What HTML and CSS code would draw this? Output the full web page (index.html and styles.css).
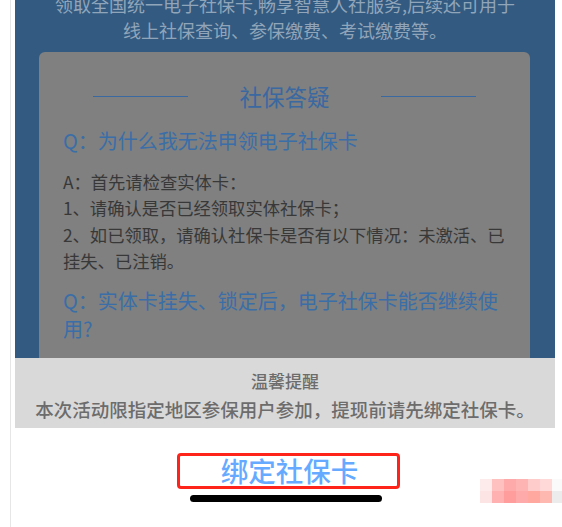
FILE: index.html
```html
<!DOCTYPE html>
<html lang="zh">
<head>
<meta charset="utf-8">
<link rel="stylesheet" href="styles.css">
</head>
<body>
<div class="page">
  <div class="gutter"></div>
  <div class="main">
    <div class="panel">
      <p class="intro">领取全国统一电子社保卡,畅享智慧人社服务,后续还可用于<br>线上社保查询、参保缴费、考试缴费等。</p>
      <div class="card">
        <div class="title-row"><span class="rule"></span><h2 class="title">社保答疑</h2><span class="rule"></span></div>
        <p class="q">Q：为什么我无法申领电子社保卡</p>
        <p class="a">A：首先请检查实体卡：<br>1、请确认是否已经领取实体社保卡；<br>2、如已领取，请确认社保卡是否有以下情况：未激活、已挂失、已注销。</p>
        <p class="q q2">Q：实体卡挂失、锁定后，电子社保卡能否继续使用?</p>
      </div>
    </div>
    <div class="notice">
      <div class="notice-title">温馨提醒</div>
      <div class="notice-text">本次活动限指定地区参保用户参加，提现前请先绑定社保卡。</div>
    </div>
    <div class="bottom">
      <div class="bind">绑定社保卡</div>
      <div class="home-bar"></div>
    </div>
  </div>
</div>
<div class="mosaic">
  <i style="background:#fdeaea"></i><i style="background:#ffc0c0"></i><i style="background:#ffaaaa"></i><i style="background:#ffb4b4"></i><i style="background:#ffcccc"></i><i style="background:#ffd8d8"></i><i style="background:#fafafa"></i>
  <i style="background:#fde4e4"></i><i style="background:#ffb0b0"></i><i style="background:#ff9c9c"></i><i style="background:#ffaaaa"></i><i style="background:#ffa8a0"></i><i style="background:#ffb8b0"></i><i style="background:#ececec"></i>
</div>
</body>
</html>
```
FILE: styles.css
```css
* { box-sizing: border-box; }
html, body { margin: 0; padding: 0; background: #fff; }
body {
  width: 562px; height: 527px; overflow: hidden; position: relative;
  font-family: "Noto Sans CJK SC", "Noto Sans", sans-serif;
}
.page { display: flex; height: 527px; }
.gutter { width: 11px; border-right: 1px solid #e6e6e6; flex: none; }
.main { width: 540px; margin-left: 4px; flex: none; display: flex; flex-direction: column; }
.panel {
  height: 358px; background: #335a80; overflow: hidden;
  display: flex; flex-direction: column; align-items: flex-start;
}
.intro {
  margin: -9px 0 0; width: 100%; text-align: center;
  font-size: 18px; line-height: 26px; color: #91a5ba;
}
.card {
  margin: 9px 0 0 24px; width: 491px; flex: 1;
  background: #808080; border-radius: 6px 6px 0 0;
  padding: 29px 24px 0 24px;
}
.title-row { display: flex; align-items: center; justify-content: center; gap: 51px; height: 30px; }
.rule { width: 95px; height: 1px; background: #3a68a0; }
.title { margin: 0; font-size: 22.5px; line-height: 30px; font-weight: 400; color: #3a68a0; }
.q { margin: 16px 0 0; font-size: 20px; line-height: 28px; color: #3a6ea8; }
.a { margin: 14px 0 0; font-size: 17.3px; line-height: 26.4px; color: #383838; }
.q2 { margin-top: 12px; }
.notice {
  height: 70px; background: #d9d9d9; padding-top: 9px;
  text-align: center; color: #6c6c6c; font-weight: 500;
}
.notice-title { font-size: 17px; line-height: 28px; }
.notice-text { font-size: 18.5px; line-height: 28px; white-space: nowrap; }
.bottom { display: flex; flex-direction: column; align-items: center; }
.bind {
  margin-top: 25px; align-self: flex-start; margin-left: 162px;
  width: 223px; height: 36px; border: 3px solid #ff2419; border-radius: 4px;
  display: flex; align-items: center; justify-content: center;
  font-size: 27.5px; font-weight: 500; color: #66aaff; line-height: 1;
  padding-left: 2px;
}
.home-bar {
  margin-top: 6px; align-self: flex-start; margin-left: 175px;
  width: 192px; height: 7px; border-radius: 4px; background: #000;
}
.mosaic {
  position: absolute; left: 480px; top: 479px;
  display: grid; grid-template-columns: repeat(6, 12px) 10px; grid-auto-rows: 12px;
}
.mosaic i { display: block; }
```
